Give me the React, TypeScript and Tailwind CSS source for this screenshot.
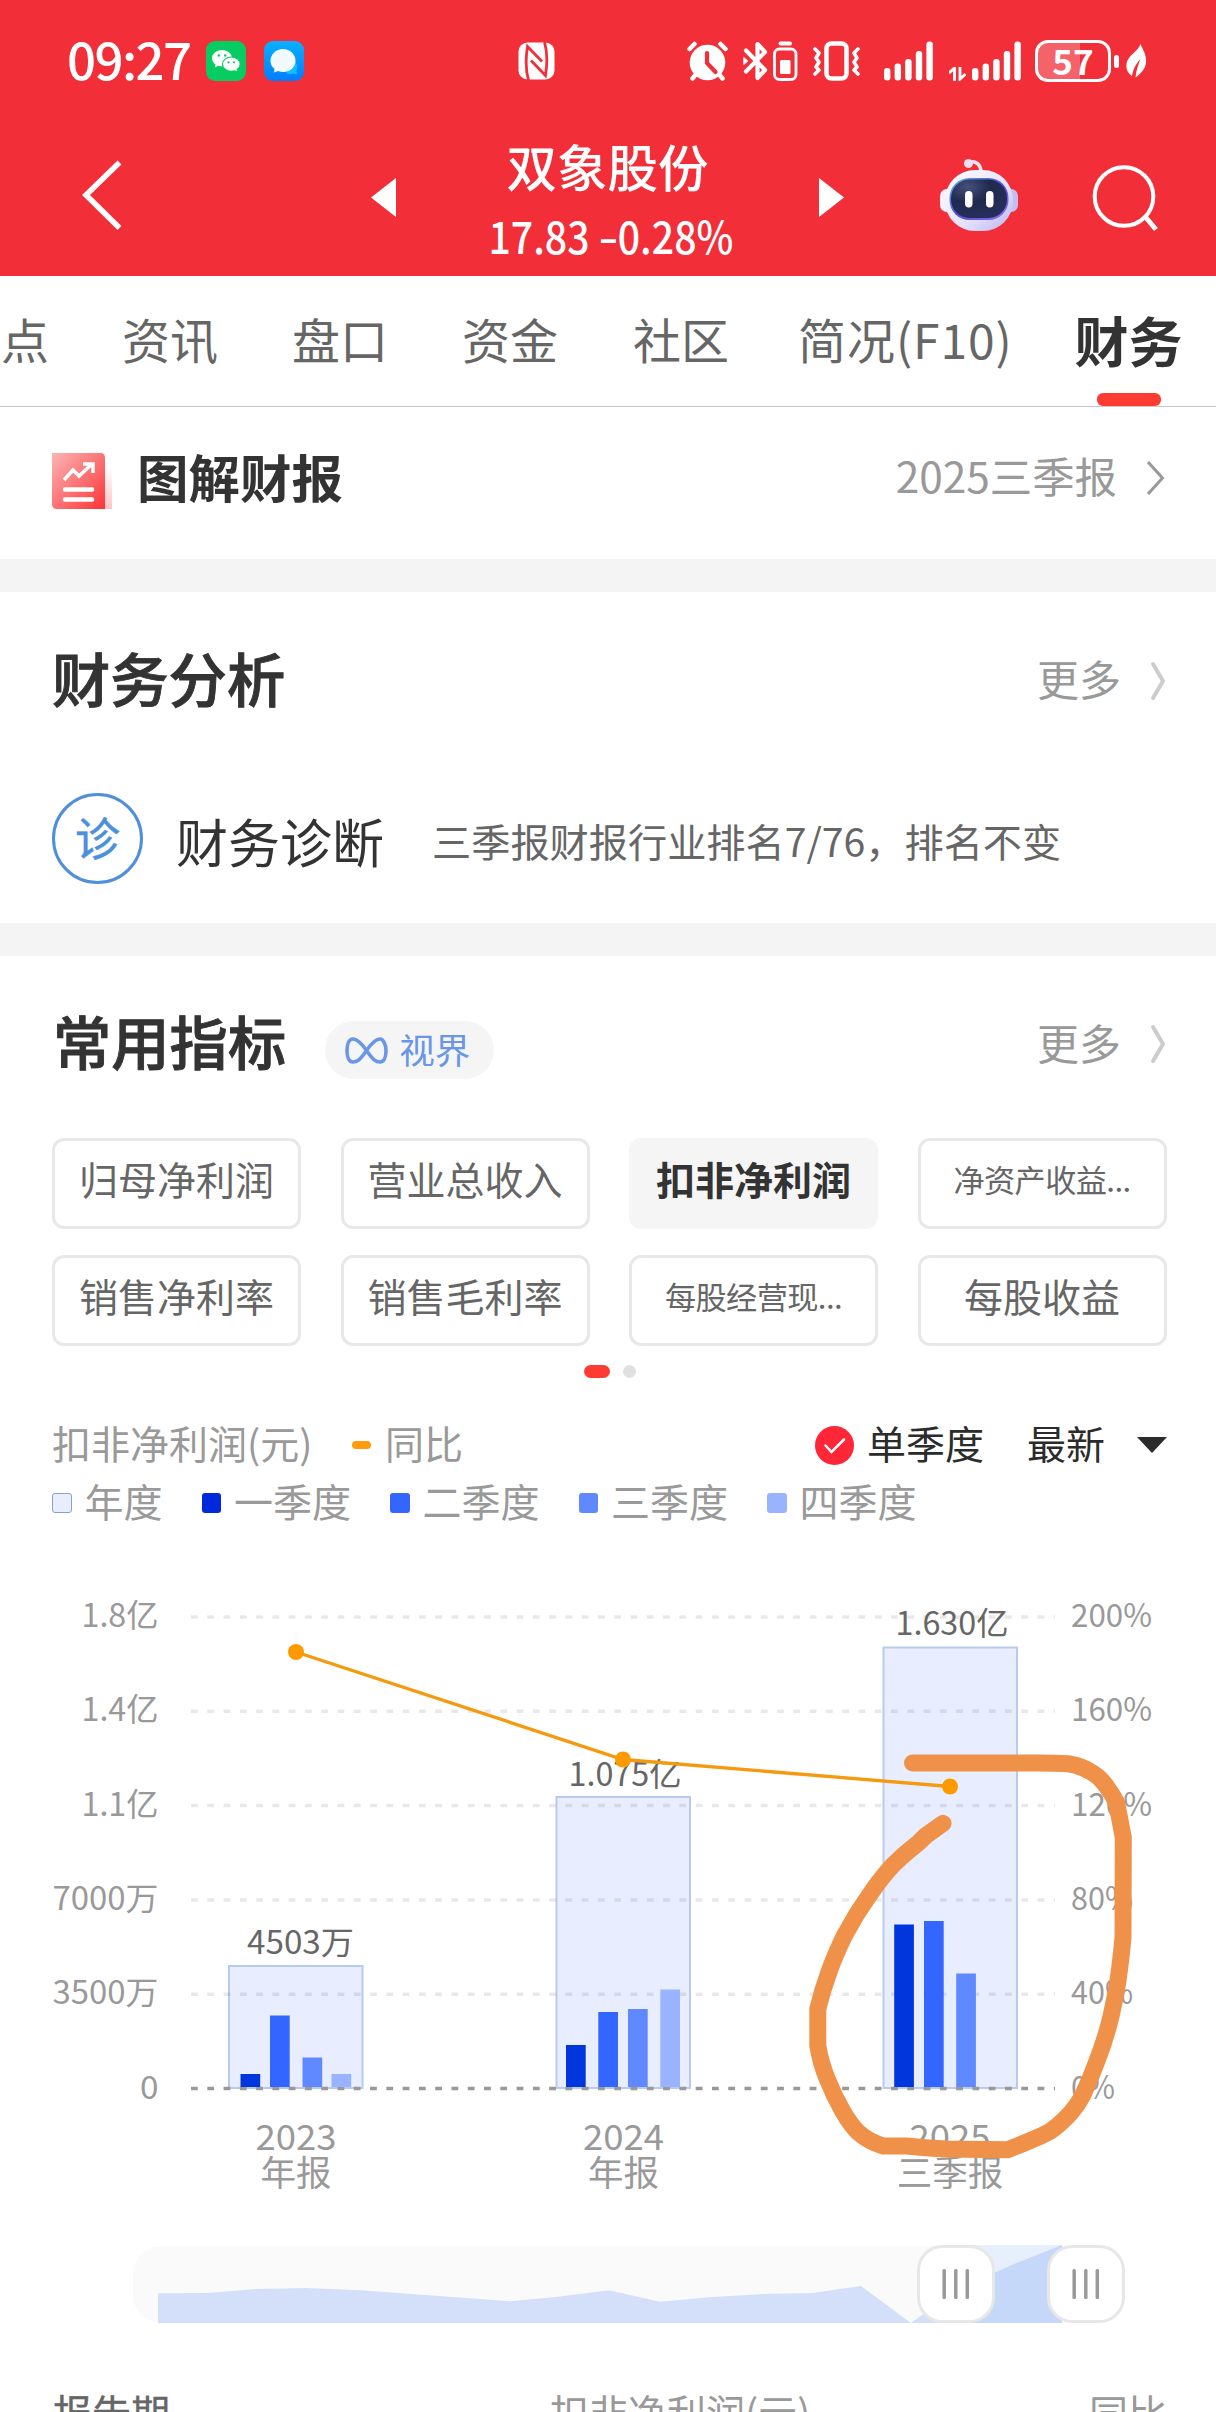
import React from "react";

const tabs = [
  { label: "资讯", cls: "ml-[73px]" },
  { label: "盘口", cls: "ml-[74px]" },
  { label: "资金", cls: "ml-[74px]" },
  { label: "社区", cls: "ml-[75px]" },
  { label: "简况(F10)", cls: "ml-[69px] tracking-[0.9px]" },
];

const metrics = [
  { label: "归母净利润" },
  { label: "营业总收入" },
  { label: "扣非净利润", active: true },
  { label: "净资产收益...", small: true },
  { label: "销售净利率" },
  { label: "销售毛利率" },
  { label: "每股经营现...", small: true },
  { label: "每股收益" },
];

const quarters = [
  { label: "一季度", cls: "bg-[#0029de]" },
  { label: "二季度", cls: "bg-[#3366ff]" },
  { label: "三季度", cls: "bg-[#6189ff]" },
  { label: "四季度", cls: "bg-[#9ab3ff]" },
];

function SignalBars() {
  const tops = [27, 22.5, 18, 10, 0.5];
  return (
    <svg className="shrink-0" width="49" height="40" viewBox="0 0 49 40" fill="#fff">
      {tops.map((t, i) => (
        <rect key={i} x={i * 10.6} y={t} width="6.4" height={39.5 - t} rx="3" />
      ))}
    </svg>
  );
}

function StatusBar() {
  return (
    <div className="flex h-[122px] items-center pl-[67px] text-white">
      <span className="-mt-[6px] w-[139px] text-[51px] font-medium leading-none tracking-[-1.6px]">09:27</span>
      <svg className="shrink-0" width="40" height="40" viewBox="0 0 40 40">
        <rect width="40" height="40" rx="9" fill="#07cc62" />
        <path d="M16 9c-5.700 0-10 3.700-10 8.300 0 2.600 1.400 4.800 3.500 6.300L8.800 26.400l3.400-1.700c1.200.4 2.500.6 3.800.6 5.700 0 10-3.600 10-8.100S21.700 9 16 9Z" fill="#fff" />
        <path d="M25.300 16c4.900 0 8.900 3.200 8.900 7.200 0 2.200-1.200 4.100-3 5.400l.6 2.700-3-1.400c-1.100.3-2.200.5-3.500.5-4.900 0-8.800-3.200-8.800-7.200S20.400 16 25.300 16Z" fill="#fff" stroke="#07cc62" strokeWidth="1.200" />
        <g fill="#07cc62"><circle cx="12.800" cy="14.500" r="1.200" /><circle cx="19.200" cy="14.500" r="1.200" /><circle cx="22.500" cy="21.300" r="1.100" /><circle cx="28" cy="21.300" r="1.100" /></g>
      </svg>
      <svg className="ml-[18px] shrink-0" width="40" height="40" viewBox="0 0 40 40">
        <defs><linearGradient id="msg" x1="0" y1="0" x2="0" y2="1"><stop offset="0" stopColor="#0ab0ff" /><stop offset="1" stopColor="#027dff" /></linearGradient></defs>
        <rect width="40" height="40" rx="9" fill="url(#msg)" />
        <path d="M22 32c4 2 8 0 9 .8l2 .5-.6-3.500c2-4 0-8-1.400-9Z" fill="#0fc0ff" />
        <path d="M19 8C12 8 6.500 13.200 6.500 19.700c0 3.400 1.500 6.200 4 8.300L10 31.500l4-1.600c1.600.7 3.200 1.100 5 1.100 7 0 12.500-5 12.500-11.300C31.500 13.200 26 8 19 8Z" fill="#f2faff" />
      </svg>
      <svg className="ml-[214px] shrink-0" width="37" height="38" viewBox="0 0 37 38">
        <rect x="0.500" y="0.500" width="36" height="37" rx="9" fill="#fff" />
        <path d="M10.500 38C7.500 28 8 14 9.500 4.500L24 19.500" stroke="#f22f38" strokeWidth="2.800" fill="none" />
        <path d="M26.500 0C29.500 10 29 24 27.500 33.500L13 18.500" stroke="#f22f38" strokeWidth="2.800" fill="none" />
      </svg>
      <svg className="ml-[132px] shrink-0" width="41" height="40" viewBox="0 0 41 40">
        <g stroke="#fff" strokeWidth="4.500" strokeLinecap="round" fill="none"><path d="M2.500 8 7.500 3M38.500 8 33.500 3M10 32 5.500 37.500M31 32l4.500 5.500" /></g>
        <circle cx="20.500" cy="21.500" r="17.800" fill="#fff" />
        <path d="M20 12v10l8.500 9" stroke="#f22f38" strokeWidth="4.200" strokeLinecap="round" fill="none" />
      </svg>
      <svg className="ml-[15px] shrink-0" width="55" height="40" viewBox="0 0 55 40" fill="none" stroke="#fff">
        <path d="M3 9.500 22 29l-7.500 8V3L22 11 3 30.500" strokeWidth="4.200" strokeLinejoin="round" strokeLinecap="round" />
        <path d="M0.800 16.500v7l4-3.500z" fill="#fff" strokeWidth="1" />
        <rect x="31.500" y="8" width="21.500" height="30.500" rx="5" strokeWidth="2.800" />
        <rect x="37" y="19" width="10.500" height="14" rx="1.500" fill="#fff" stroke="none" />
        <rect x="35.500" y="0.500" width="13.500" height="4" rx="2" fill="#fff" stroke="none" />
      </svg>
      <svg className="ml-[15px] shrink-0" width="47" height="40" viewBox="0 0 47 40" fill="none" stroke="#fff" strokeLinejoin="round" strokeLinecap="round">
        <rect x="13.500" y="2.500" width="20" height="35" rx="5" strokeWidth="4.500" />
        <path d="M2 8l4 4-3 5 3 4-3 5 3 3-4 4M45 8l-4 4 3 5-3 4 3 5-3 3 4 4" strokeWidth="3.600" />
      </svg>
      <div className="ml-[24px] flex"><SignalBars /></div>
      <div className="ml-[16px] flex items-end">
        <svg className="mr-[6px]" width="17" height="14" viewBox="0 0 17 14" fill="none" stroke="#fff" strokeWidth="2.800"><path d="M0 6 5.500 1V14M11 0v12l5.500-5" /></svg>
        <SignalBars />
      </div>
      <div className="ml-[14px] flex h-[42px] w-[76px] shrink-0 items-center justify-center rounded-[13px] border-[3px] border-white bg-linear-to-r from-white/25 from-60% to-transparent to-60%">
        <span className="-mt-[4px] text-[35px] font-bold leading-none">57</span>
      </div>
      <div className="ml-[3px] h-[13px] w-[5px] shrink-0 rounded-full bg-white" />
      <svg className="ml-[7px] shrink-0" width="21" height="34" viewBox="0 0 21 34">
        <path d="M14.500 0c1.500 4 6.500 11 5.500 19-1 7-6 11-10.500 14.500C10 27 12.500 20 14.500 15 9.500 20 7 26 6 32 1.500 29 0 25 .5 20 1.500 11 12 8 14.500 0Z" fill="#fff" />
      </svg>
    </div>
  );
}

function Robot() {
  return (
    <svg className="shrink-0" width="78" height="74" viewBox="0 0 78 74">
      <defs>
        <linearGradient id="shell" x1="0" y1="0" x2="1" y2="1"><stop offset="0" stopColor="#ffffff" /><stop offset=".6" stopColor="#e4e1fa" /><stop offset="1" stopColor="#b9b3ee" /></linearGradient>
        <linearGradient id="rim" x1="0" y1="0" x2="1" y2="1"><stop offset="0" stopColor="#55b5e8" /><stop offset=".5" stopColor="#5b48d8" /><stop offset="1" stopColor="#8a70f0" /></linearGradient>
        <radialGradient id="face" cx=".3" cy=".2" r=".8"><stop offset="0" stopColor="#46507a" /><stop offset=".5" stopColor="#202a4e" /><stop offset="1" stopColor="#252e58" /></radialGradient>
      </defs>
      <path d="M28 5c6-3 12 0 13 8" stroke="#e6e0f5" strokeWidth="3.500" fill="none" />
      <circle cx="28.500" cy="5.500" r="4.500" fill="#f0dff0" />
      <rect x="0" y="31" width="14" height="23" rx="7" fill="#f3f1fd" />
      <rect x="64" y="31" width="14" height="23" rx="7" fill="#c4bff0" />
      <rect x="5" y="12" width="68" height="61" rx="30" fill="url(#shell)" />
      <rect x="9.500" y="20" width="59" height="42" rx="20" fill="url(#rim)" />
      <rect x="11" y="21.500" width="56" height="38.500" rx="18.500" fill="url(#face)" />
      <rect x="25" y="33" width="7.500" height="16.500" rx="3.700" fill="#fff" />
      <rect x="46" y="33" width="7.500" height="16.500" rx="3.700" fill="#fff" />
    </svg>
  );
}

function TitleBar() {
  return (
    <div className="flex h-[154px] text-white">
      <svg className="ml-[79px] mt-[36px] shrink-0" width="46" height="74" viewBox="0 0 46 74">
        <path d="M40.500 4.500 7 37l33.500 33" stroke="#fff" strokeWidth="5.500" fill="none" />
      </svg>
      <svg className="ml-[246px] mt-[56px] shrink-0" width="25" height="39" viewBox="0 0 25 39"><path d="M25 0v39L0 19.500z" fill="#fff" /></svg>
      <div className="flex w-[423px] flex-col items-center pt-[18px]">
        <div className="text-[50.500px] font-medium leading-none">双象股份</div>
        <div className="ml-[6px] mt-[22px] origin-center scale-x-[0.882] whitespace-nowrap text-[44.500px] font-medium leading-none">
          17.83 <span className="mx-[3px] inline-block scale-x-[1.450]">-</span>0.28%
        </div>
      </div>
      <svg className="mt-[56px] shrink-0" width="25" height="39" viewBox="0 0 25 39"><path d="M0 0v39l25-19.500z" fill="#fff" /></svg>
      <div className="ml-[96px] mt-[36px]"><Robot /></div>
      <svg className="ml-[74px] mt-[42px] shrink-0" width="68" height="68" viewBox="0 0 68 68" fill="none" stroke="#fff">
        <circle cx="32" cy="32.500" r="29.300" strokeWidth="4" /><path d="M53 52.500 64 65.500" strokeWidth="5" />
      </svg>
    </div>
  );
}

function Chevron({ light = false }: { light?: boolean }) {
  return light ? (
    <svg className="shrink-0" width="16" height="40" viewBox="0 0 16 40"><path d="M3 3 13 20 3 37" stroke="#ccc" strokeWidth="4" strokeLinecap="round" strokeLinejoin="round" fill="none" /></svg>
  ) : (
    <svg className="shrink-0" width="19" height="36" viewBox="0 0 19 36"><path d="M2 2 16.500 18 2 34" stroke="#999" strokeWidth="3" fill="none" /></svg>
  );
}

function More() {
  return (
    <div className="ml-auto flex items-center text-[#999]">
      <span className="-mt-[5px] text-[42px] leading-none">更多</span>
      <div className="ml-[29px] flex"><Chevron light /></div>
    </div>
  );
}

const FONT = "'Noto Sans CJK SC', sans-serif";
const gridY = [0, 1, 2, 3, 4];
const leftLabels = ["1.8亿", "1.4亿", "1.1亿", "7000万", "3500万", "0"];
const rightLabels = ["200%", "160%", "120%", "80%", "40%", "0%"];
const colors = ["#0236dd", "#3366ff", "#6189ff", "#9ab3ff"];
const groups = [
  { x: 229, top: 1966, label: "4503万", lx: 300.500, ly: 1942.500, cx: 296, year: "2023", kind: "年报", bars: [[240.500, 2074], [270, 2015.500], [302.500, 2057.500], [331.500, 2074]] },
  { x: 556.500, top: 1797, label: "1.075亿", lx: 625, ly: 1774, cx: 623.500, year: "2024", kind: "年报", bars: [[566, 2045], [598.300, 2012], [628, 2009], [660.300, 1989.500]] },
  { x: 883.500, top: 1647.500, label: "1.630亿", lx: 952, ly: 1623.500, cx: 950, year: "2025", kind: "三季报", bars: [[894.200, 1924.500], [924, 1921], [956.200, 1973.500]] },
];

function Chart() {
  return (
    <svg className="block shrink-0" width="1216" height="660" viewBox="0 1550 1216 660" fontFamily={FONT}>
      {groups.map((g) => (
        <rect key={g.year} x={g.x} y={g.top} width="133.500" height={2088 - g.top} fill="#e8eeff" stroke="#b9caf0" strokeWidth="2" />
      ))}
      {gridY.map((i) => (
        <path key={i} d={`M191 ${1617 + i * 94.3}H1055`} stroke="#000" strokeOpacity="0.090" strokeWidth="3.500" strokeDasharray="6.800 9.480" />
      ))}
      <path d="M191 2088.500H1055" stroke="#999" strokeWidth="3.500" strokeDasharray="6.800 9.480" />
      {groups.map((g) => (
        <g key={g.year}>
          {g.bars.map(([x, y], i) => (
            <rect key={i} x={x} y={y} width="19.700" height={2087 - y} fill={colors[i]} />
          ))}
          <text x={g.lx} y={g.ly + 11.5} fontSize="32" fill="#666" textAnchor="middle" textLength={g.label.length === 5 ? 107 : 113} lengthAdjust="spacingAndGlyphs">{g.label}</text>
          <text x={g.cx} y="2149.500" fontSize="35.500" fill="#999" textAnchor="middle" textLength="81" lengthAdjust="spacingAndGlyphs">{g.year}</text>
          <text x={g.cx} y="2186" fontSize="35.500" fill="#999" textAnchor="middle">{g.kind}</text>
        </g>
      ))}
      {leftLabels.map((t, i) => (
        <text key={t} x="158.500" y={1627 + i * 94.3} fontSize="32" fill="#999" textAnchor="end" textLength={t.length === 5 ? 106 : t.length === 4 ? 77 : 18.5} lengthAdjust="spacingAndGlyphs">{t}</text>
      ))}
      {rightLabels.map((t, i) => (
        <text key={t} x="1071" y={1627 + i * 94.3} fontSize="32" fill="#999" textLength={t.length === 4 ? 81 : t.length === 3 ? 62 : 44} lengthAdjust="spacingAndGlyphs">{t}</text>
      ))}
      <path d="M296 1652 623 1759.500 950 1786.500" stroke="#f5990f" strokeWidth="3.300" fill="none" />
      <g fill="#ff9900"><circle cx="296" cy="1652" r="8" /><circle cx="623" cy="1759.500" r="8" /><circle cx="950" cy="1786.500" r="8" /></g>
      <path
        d="M912.500 1763H1038.500C1055 1763 1062 1763 1069.500 1764Q1082 1766 1092.700 1773Q1101 1778 1108 1788.600Q1114 1797 1116.700 1803L1123.300 1837.600L1123 1937.600Q1120 1970 1116 1992.700L1111.300 2015Q1106 2038 1096.600 2062Q1090 2080 1083 2094.700Q1076 2108 1065.500 2118.400Q1058 2126 1050 2131.400Q1042 2136 1030.600 2140.400Q1020 2145 1007.400 2149.800L945.300 2149Q925 2148 906.600 2146H883.300Q869 2142 858 2132.200Q850 2124 842.600 2111Q834 2096 827 2078.400Q821 2064 817.800 2045.700V2009Q822 1991 829 1972Q835 1955 844.500 1935.500Q856 1914 869.700 1894.700Q881 1878 893 1865Q904 1854 918.200 1843L926 1835.500L943 1823.300"
        fill="none" stroke="#f0914a" strokeWidth="17" strokeLinecap="round" strokeLinejoin="round"
      />
    </svg>
  );
}

function Slider() {
  return (
    <svg className="block shrink-0" width="1216" height="182" viewBox="0 2210 1216 182">
      <rect x="133" y="2246.500" width="980" height="76" rx="27" fill="#fafafa" />
      <path d="M158 2323V2293.300L207 2293 256 2289 306 2288 361 2290.300 510 2301.300 558 2296.700 609 2290.300 660 2301.700 709 2297.300 763 2294 812 2293 861 2286 911 2323 961 2287V2323Z" fill="#d4e0fa" />
      <rect x="956" y="2245" width="106" height="78" fill="#e8effc" />
      <path d="M956 2323V2290L1011.500 2265 1062 2245V2323Z" fill="#c6d8f9" />
      {[918.5, 1048.5].map((x) => (
        <g key={x}>
          <rect x={x} y="2246.500" width="75" height="75" rx="24" fill="#fff" stroke="#e7e7e7" strokeWidth="3" />
          {[25.7, 37.3, 48.8].map((d) => (
            <rect key={d} x={x + d - 1.75} y="2269" width="3.500" height="30" rx="1.500" fill="#999" />
          ))}
        </g>
      ))}
    </svg>
  );
}

export default function App() {
  return (
    <div className="flex h-[2412px] w-[1216px] flex-col overflow-hidden bg-white font-['Noto_Sans_CJK_SC',sans-serif] text-[#333] *:shrink-0">
      <header className="h-[276px] bg-[#f22f38]">
        <StatusBar />
        <TitleBar />
      </header>

      <nav className="flex h-[131px] items-start overflow-hidden whitespace-nowrap border-b border-[#c8c8c8] text-[48px] leading-none text-[#666] *:shrink-0">
        <span className="ml-px mt-[38px]">点</span>
        {tabs.map((t) => (
          <span key={t.label} className={"mt-[38px] " + t.cls}>{t.label}</span>
        ))}
        <div className="ml-[62px] flex flex-col items-center">
          <span className="mt-[37px] text-[54px] font-bold text-[#333]">财务</span>
          <div className="mt-[26px] h-[13px] w-[64px] rounded-[6px] bg-[#fc3b33]" />
        </div>
      </nav>

      <section className="flex h-[152px] items-center pb-[8px] pl-[52px] pr-[50px]">
        <svg className="mt-[5px] shrink-0" width="60" height="57" viewBox="0 0 60 57">
          <defs>
            <linearGradient id="doc" x1="0" y1="0" x2="1" y2="1"><stop offset="0" stopColor="#fbb5b5" /><stop offset="1" stopColor="#fd3437" /></linearGradient>
            <linearGradient id="fold" x1="0" y1="0" x2="0" y2="1"><stop offset="0" stopColor="#fff" /><stop offset="1" stopColor="#ffc3c5" /></linearGradient>
          </defs>
          <rect x="50" y="14" width="10" height="42" fill="url(#fold)" />
          <path d="M0 0H49Q53 0 53 5V56H5Q0 56 0 51Z" fill="url(#doc)" />
          <path d="M12 27 21 17l6 6L40 11M31 11h10v9" stroke="#fff" strokeWidth="3.500" fill="none" />
          <path d="M13 36.500h27M13 46.500h27" stroke="#fff" strokeWidth="4.500" strokeLinecap="round" />
        </svg>
        <h2 className="-mt-[7px] ml-[25px] text-[51.500px] font-bold leading-none">图解财报</h2>
        <span className="-mt-[7px] ml-auto text-[42.400px] leading-none text-[#999]">2025三季报</span>
        <div className="-mt-[2px] ml-[29px] mr-px flex"><Chevron /></div>
      </section>
      <div className="h-[33px] bg-[#f4f4f4]" />

      <section className="h-[331px] pl-[52px] pr-[50px]">
        <div className="flex h-[177px] items-center">
          <h2 className="-mt-[7px] text-[58.300px] font-medium leading-none [-webkit-text-stroke:0.9px_#333]">财务分析</h2>
          <More />
        </div>
        <div className="mt-[24px] flex h-[91px] items-center">
          <div className="flex size-[91px] items-center justify-center rounded-full border-[3px] border-[#4f8fdb] text-[45px] leading-none text-[#4a90dd]">
            <span className="-mt-[5px] [-webkit-text-stroke:0.5px_#4a90dd]">诊</span>
          </div>
          <span className="ml-[33px] mt-[4px] text-[52px] leading-none text-[#333]">财务诊断</span>
          <span className="ml-[48px] mt-[5px] text-[39.200px] leading-none text-[#666]">三季报财报行业排名7/76，排名不变</span>
        </div>
      </section>
      <div className="h-[33px] bg-[#f4f4f4]" />

      <section className="flex h-[182px] items-center pb-[6px] pl-[53px] pr-[50px]">
        <h2 className="-mt-[7px] text-[58.300px] font-medium leading-none [-webkit-text-stroke:0.9px_#333]">常用指标</h2>
        <div className="ml-[39px] mt-[12px] flex h-[58px] w-[169px] items-center rounded-full bg-[#f5f5f5] pl-[20px] text-[#6a96e8]">
          <svg width="43" height="27" viewBox="0 0 43 27"><path d="M21.500 13.500C15 4 11 2 8 2 4 2 2 7 2 13.500S4 25 8 25s7-2 13.500-11.500S32 2 35 2s6 5 6 11.500S39 25 35 25 28 23 21.500 13.500Z" fill="none" stroke="currentColor" strokeWidth="3.600" /></svg>
          <span className="-mt-[2px] ml-[11px] text-[35.500px] leading-none">视界</span>
        </div>
        <More />
      </section>

      <section className="grid h-[208px] grid-cols-4 gap-x-[39.500px] gap-y-[26px] pl-[52px] pr-[49.500px]">
        {metrics.map((m) => (
          <div
            key={m.label}
            className={
              "flex h-[91px] items-center justify-center whitespace-nowrap rounded-[12px] leading-none " +
              (m.active ? "bg-[#f5f5f5] font-bold text-[#333] " : "border-[3px] border-[#e8e8e8] text-[#666] ") +
              (m.small ? "text-[31.200px]" : "text-[39px]")
            }
          >
            <span className={m.small ? "-mt-[9px] tracking-[-0.6px]" : "-mt-[10px]"}>{m.label}</span>
          </div>
        ))}
      </section>

      <div className="mt-[19px] flex h-[13px] justify-center gap-[13px] pl-[4px]">
        <div className="w-[26px] rounded-full bg-[#fc3b33]" />
        <div className="w-[13px] rounded-full bg-[#e0e0e0]" />
      </div>

      <section className="h-[172px] pl-[52px] pr-[49px] text-[39px] leading-none text-[#999]">
        <div className="mt-[37px] flex h-[60px] items-center *:shrink-0">
          <span className="-mt-[6px] w-[300px] text-[39px]">扣非净利润(元)</span>
          <div className="h-[8px] w-[19px] rounded-[4px] bg-[#ff9b0c]" />
          <span className="-mt-[6px] ml-[14px]">同比</span>
          <div className="ml-auto flex items-center text-[#2b2b2b]">
            <svg width="39" height="39" viewBox="0 0 39 39"><circle cx="19.500" cy="19.500" r="19.500" fill="#ff2638" /><path d="M10.500 19.500 16.500 26 29 13.500" stroke="#fff" strokeWidth="2.500" fill="none" strokeLinecap="round" /></svg>
            <span className="-mt-[6px] ml-[13px]">单季度</span>
            <span className="-mt-[6px] ml-[43px]">最新</span>
            <svg className="-mt-px ml-[32px]" width="30" height="16" viewBox="0 0 30 16"><path d="M0 0h30L15 16z" fill="#2b2b2b" /></svg>
          </div>
        </div>
        <div className="mt-[1px] flex h-[54px] items-center gap-[39px]">
          <div className="flex items-center gap-[12.500px]">
            <div className="size-[20px] rounded-[3px] border border-[#86a0dc] bg-[#e8eeff]" />
            <span className="-mt-[5px]">年度</span>
          </div>
          {quarters.map((q) => (
            <div key={q.label} className="flex items-center gap-[13px]">
              <div className={"h-[20px] w-[19.500px] rounded-[3px] " + q.cls} />
              <span className="-mt-[5px]">{q.label}</span>
            </div>
          ))}
        </div>
      </section>

      <Chart />
      <Slider />

      <div className="flex h-[20px] overflow-hidden pl-[53px] pr-[49px] text-[39px] leading-none text-[#999] *:shrink-0">
        <span className="w-[497px] text-[#666] [-webkit-text-stroke:0.4px_#666]">报告期</span>
        <span>扣非净利润(元)</span>
        <span className="ml-auto">同比</span>
      </div>
    </div>
  );
}
